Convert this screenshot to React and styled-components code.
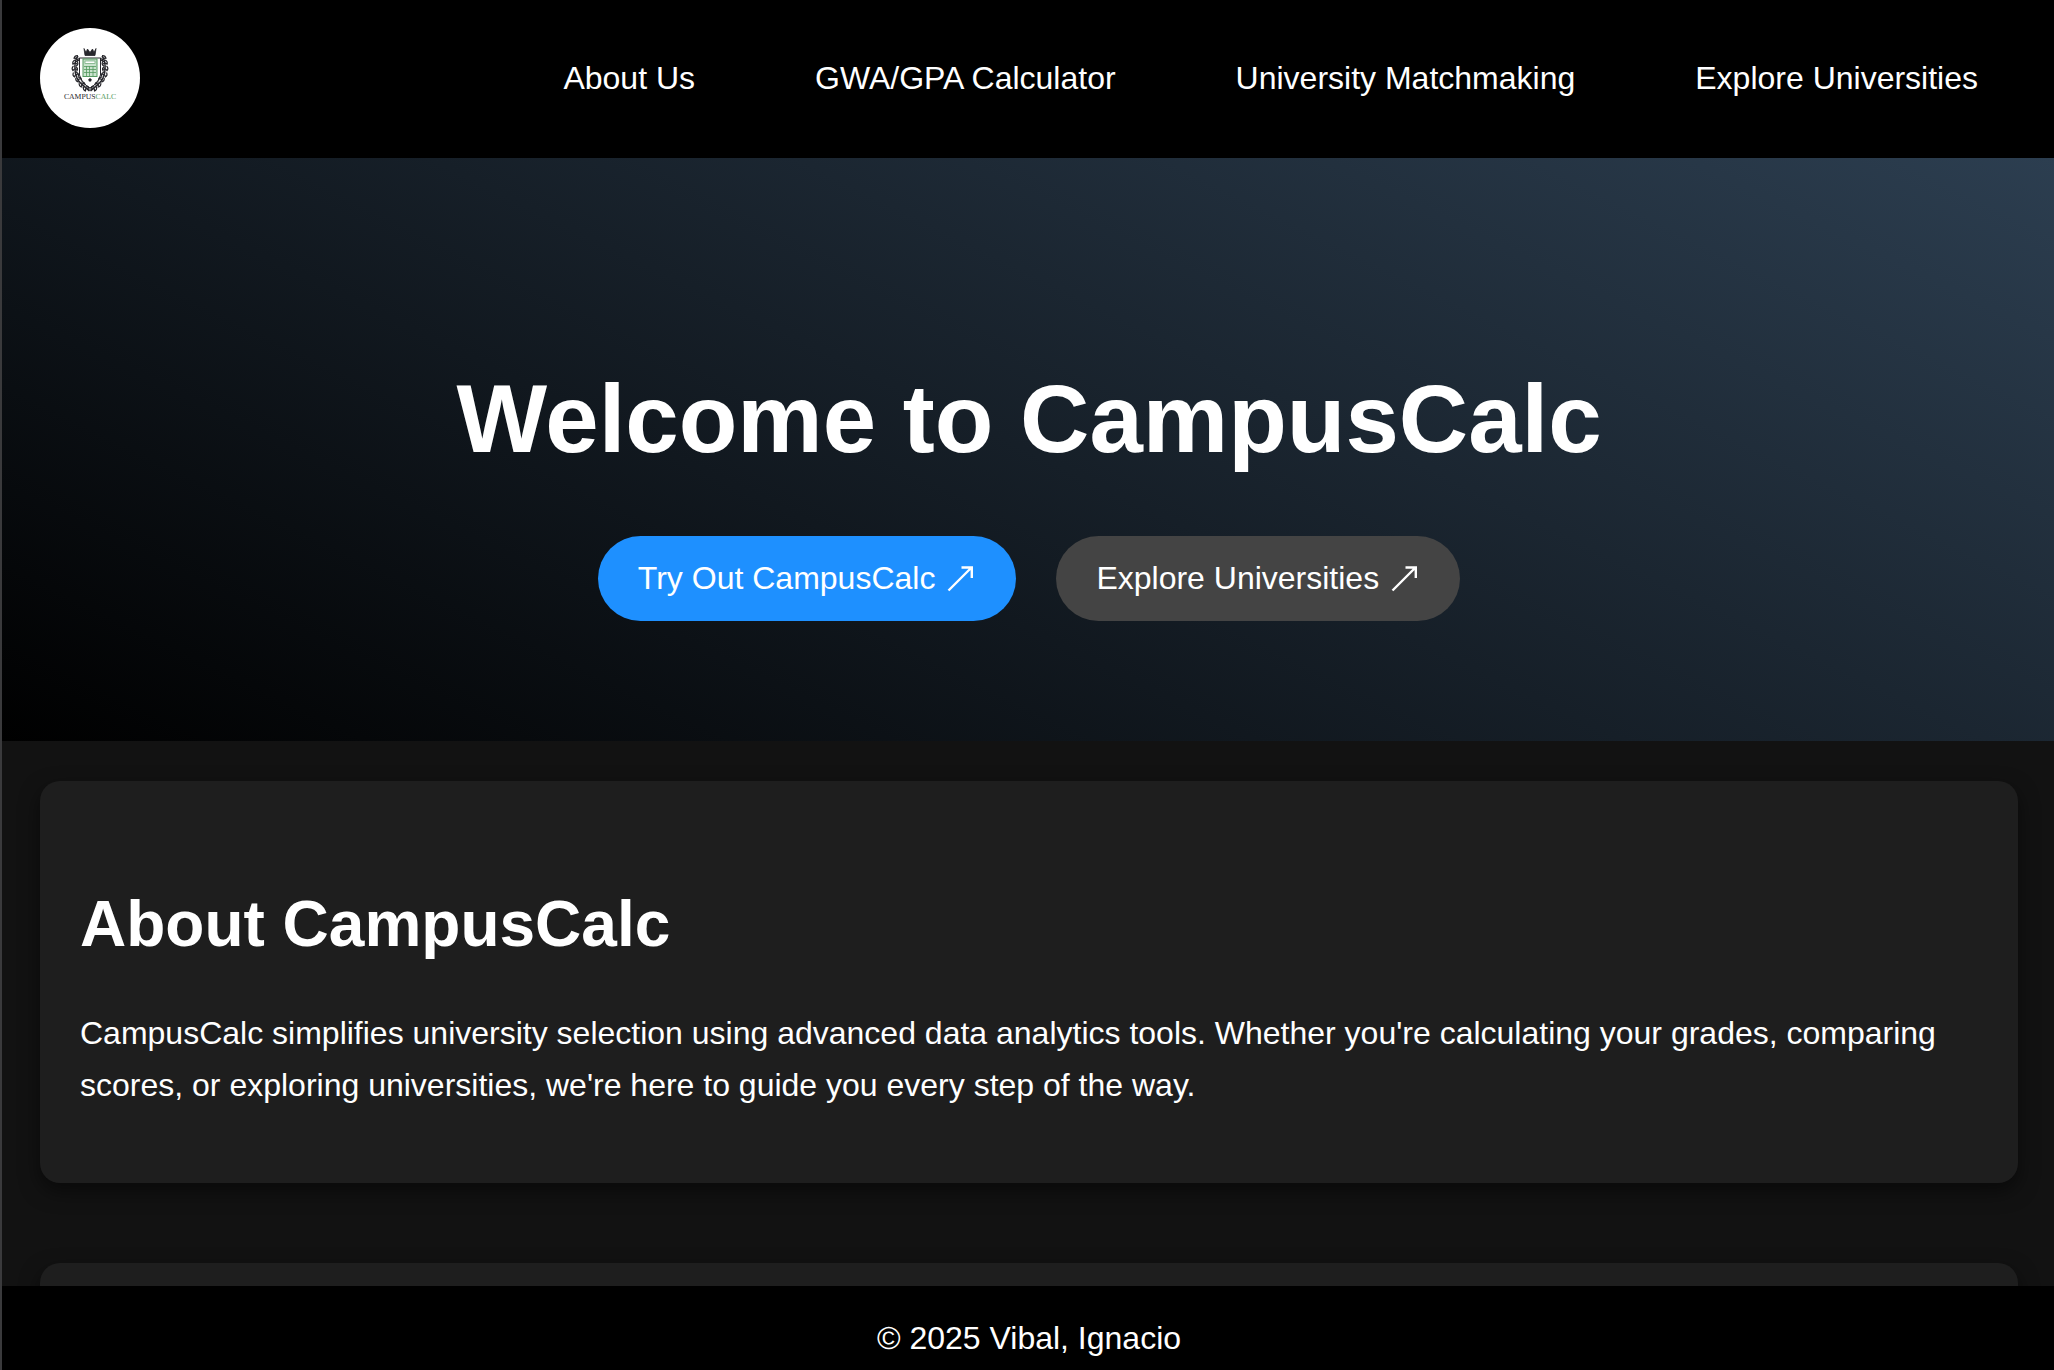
import React from "react";
import styled, { createGlobalStyle } from "styled-components";

const GlobalStyle = createGlobalStyle`
  * { box-sizing: border-box; }
  body {
    margin: 0;
    background: #121212;
    color: #fff;
    font-family: "Liberation Sans", Arial, sans-serif;
    font-size: 32px;
    line-height: 52px;
  }
`;

const Page = styled.div`
  display: flex;
  flex-direction: column;
  height: 100vh;
  border-left: 2px solid #3a3a3c;
`;

const Content = styled.div`
  flex: 1;
  min-height: 0;
  overflow-y: auto;
  scrollbar-width: none;
`;

const Header = styled.header`
  display: flex;
  align-items: center;
  justify-content: space-between;
  padding: 28px 76px 30px 38px;
  background: #000;
`;

const LogoLink = styled.a`
  display: block;
  width: 100px;
  height: 100px;
  border-radius: 50%;
  overflow: hidden;
  background: #fff;

  svg { display: block; }
`;

const Nav = styled.nav`
  display: flex;
  gap: 120px;
`;

const NavLink = styled.a`
  color: #fff;
  text-decoration: none;
  white-space: nowrap;
`;

const Hero = styled.section`
  display: flex;
  flex-direction: column;
  align-items: center;
  padding: 184px 36px 120px 38px;
  background: linear-gradient(26deg, #000, #2c3e50);
`;

const HeroTitle = styled.h1`
  margin: 0 0 40px;
  font-size: 96px;
  line-height: 154px;
  text-align: center;
`;

const Actions = styled.div`
  display: flex;
  gap: 40px;
`;

const ActionButton = styled.button`
  display: flex;
  align-items: center;
  gap: 8px;
  padding: 24px 40px;
  border: 0;
  border-radius: 50px;
  background: ${({ $primary }) => ($primary ? "#1e90ff" : "#444")};
  color: #fff;
  font: inherit;
  line-height: 37px;
  white-space: nowrap;
  cursor: pointer;
`;

const Sections = styled.main`
  display: flex;
  flex-direction: column;
  gap: 80px;
  padding: 40px 36px 40px 38px;
`;

const Card = styled.section`
  min-height: 402px;
  padding: 40px;
  border-radius: 20px;
  background: #1e1e1e;
  box-shadow: 0 8px 20px rgba(0, 0, 0, 0.5);
`;

const CardTitle = styled.h2`
  margin: 52px 0 32px;
  font-size: 64px;
  line-height: 102px;
`;

const CardText = styled.p`
  margin: 0 0 32px;
`;

const Footer = styled.footer`
  padding: 26px 36px 6px 38px;
  background: #000;
  text-align: center;
`;

const leaves = [
  [36, 57, 40], [34.5, 62, 10], [34, 68, -10], [35, 74, -30], [38, 79, -45], [41.5, 84, -50], [45.5, 88, -40],
];

function Logo() {
  const side = (
    <g>
      <path d="M38 28 C34 33 34 44 37 50 C39 55 44 58 49.500 63" fill="none" stroke="#26262b" strokeWidth="1.500" />
      {leaves.map(([x, y, a]) => (
        <g key={y} transform={`rotate(${a} ${x} ${y - 27})`}>
          <path
            d={`M${x} ${y - 30} q-3 2 -1 5 M${x + 2} ${y - 29} q3 2 0 5 M${x - 1} ${y - 26} q2 -2 4 0`}
            fill="none"
            stroke="#26262b"
            strokeWidth="1.200"
          />
        </g>
      ))}
    </g>
  );
  return (
    <svg width="100" height="100" viewBox="0 0 100 100" role="img" aria-label="CampusCalc">
      <path d="M44 20.500 l2 4 l1.500 -3.500 l2.500 3.500 l2.500 -3.500 l1.500 3.500 l2 -4 l-1 7 h-10 z" fill="#26262b" stroke="#26262b" strokeWidth=".8" />
      <path d="M39.500 30 H60.500 V47 Q58.500 55 50 60 Q41.500 55 39.500 47 Z" fill="#fff" stroke="#26262b" strokeWidth="1" />
      {side}
      <g transform="translate(100 0) scale(-1 1)">{side}</g>
      <rect x="43" y="31" width="14" height="17.500" fill="#c9e3cd" stroke="#559a61" strokeWidth="1" />
      <rect x="45" y="33" width="10" height="2.500" fill="#fff" stroke="#559a61" strokeWidth=".6" />
      <path d="M44 38.500 H56 M44 41.500 H56 M44 44.500 H56 M46.500 38 V48 M49.500 38 V48 M53 38 V48" stroke="#559a61" strokeWidth=".8" />
      <path d="M50 50 l1.800 1.400 l-.8 2.200 h-2 l-.8 -2.200 z" fill="#26262b" />
      <text x="50" y="71" textAnchor="middle" fontFamily="Liberation Serif, serif" fontSize="7.7" textRendering="geometricPrecision">
        <tspan fill="#26262b">CAMPUS</tspan>
        <tspan fill="#559a61">CALC</tspan>
      </text>
    </svg>
  );
}

function ArrowUpRight() {
  return (
    <svg width="33" height="32" viewBox="0 0 33 32" fill="none" stroke="#fff" strokeWidth="2.400" aria-hidden="true">
      <path d="M5.500 27.500 L28.500 4.500 M18.500 4.500 H28.800 V15" />
    </svg>
  );
}

const links = ["About Us", "GWA/GPA Calculator", "University Matchmaking", "Explore Universities"];

export default function App() {
  return (
    <>
      <GlobalStyle />
      <Page>
        <Content>
          <Header>
            <LogoLink href="#home"><Logo /></LogoLink>
            <Nav>
              {links.map((label) => (
                <NavLink key={label} href="#about">{label}</NavLink>
              ))}
            </Nav>
          </Header>
          <Hero>
            <HeroTitle>Welcome to CampusCalc</HeroTitle>
            <Actions>
              <ActionButton type="button" $primary>Try Out CampusCalc <ArrowUpRight /></ActionButton>
              <ActionButton type="button">Explore Universities <ArrowUpRight /></ActionButton>
            </Actions>
          </Hero>
          <Sections>
            <Card id="about">
              <CardTitle>About CampusCalc</CardTitle>
              <CardText>
                CampusCalc simplifies university selection using advanced data analytics tools. Whether you're
                calculating your grades, comparing scores, or exploring universities, we're here to guide you every
                step of the way.
              </CardText>
            </Card>
            <Card />
          </Sections>
        </Content>
        <Footer>© 2025 Vibal, Ignacio</Footer>
      </Page>
    </>
  );
}
